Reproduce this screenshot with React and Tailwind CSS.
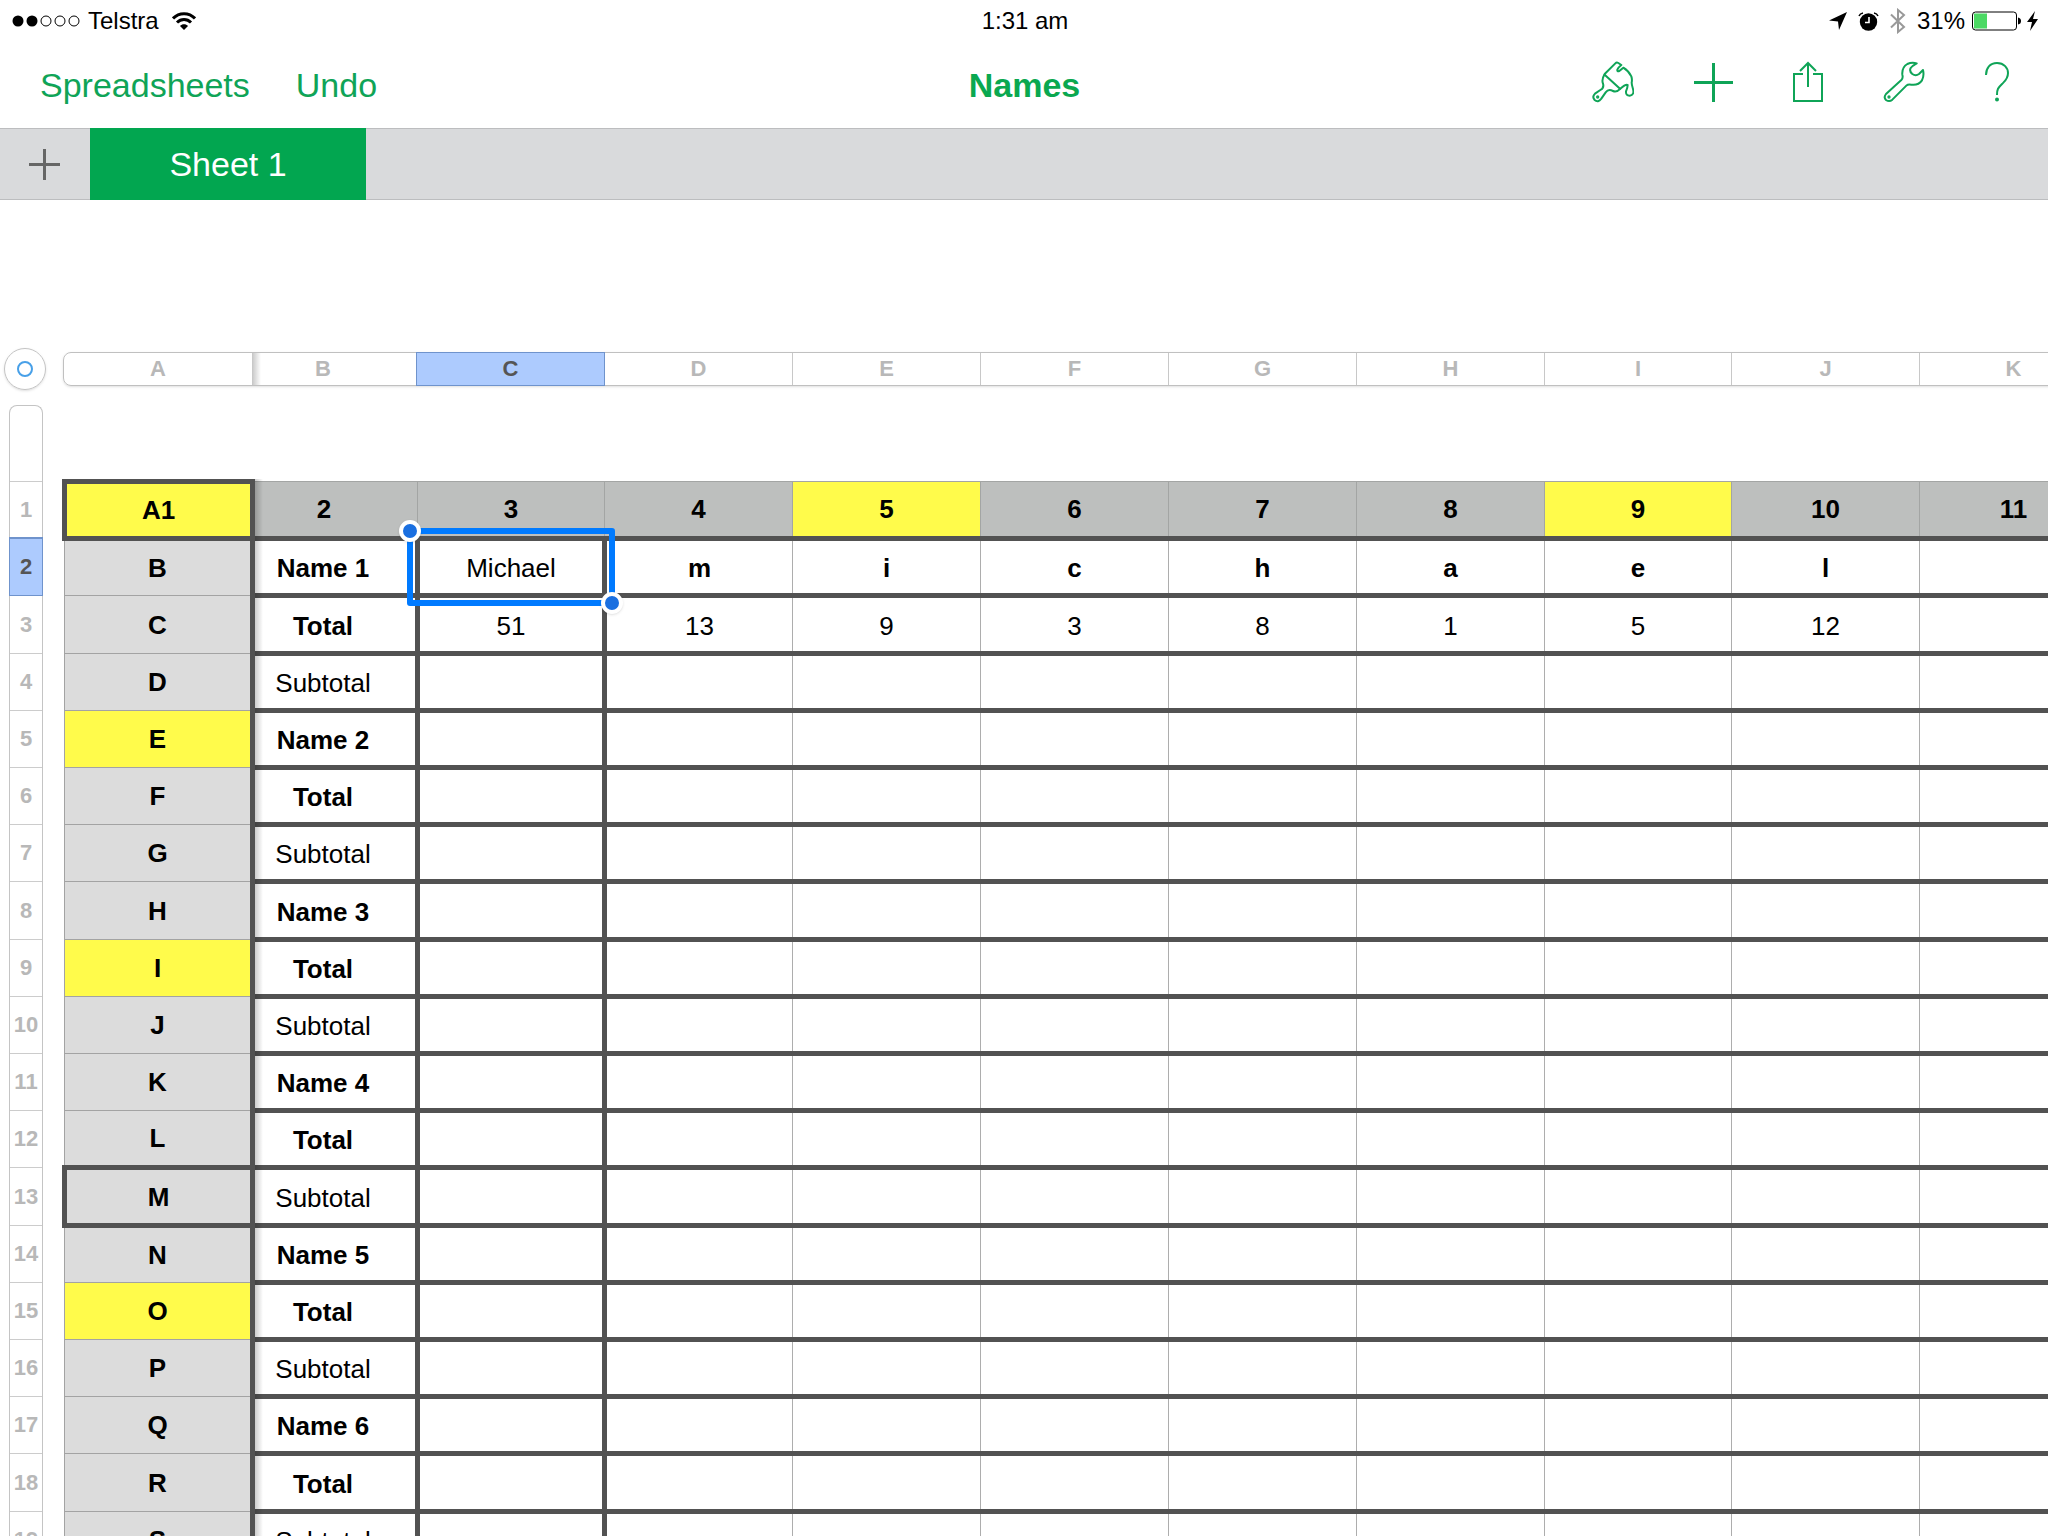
import { clsx } from 'clsx';

const columns = [
  { letter: 'A', width: 'w-[188px]' },
  { letter: 'B', width: 'w-[165px]' },
  { letter: 'C', width: 'w-[187px]' },
  { letter: 'D', width: 'w-[188px]' },
  { letter: 'E', width: 'w-[188px]' },
  { letter: 'F', width: 'w-[188px]' },
  { letter: 'G', width: 'w-[188px]' },
  { letter: 'H', width: 'w-[188px]' },
  { letter: 'I', width: 'w-[187px]' },
  { letter: 'J', width: 'w-[188px]' },
  { letter: 'K', width: 'w-[188px]' },
];

const headerCells = ['A1', '2', '3', '4', '5', '6', '7', '8', '9', '10', '11'];

const rowLetters = 'BCDEFGHIJKLMNOPQRS'.split('');

const values = {
  2: ['Michael', 'm', 'i', 'c', 'h', 'a', 'e', 'l', ''],
  3: ['51', '13', '9', '3', '8', '1', '5', '12', ''],
};

const emptyRow = ['', '', '', '', '', '', '', '', ''];

const rows = rowLetters.map((letter, i) => {
  const kind = i % 3;
  const label = kind === 0 ? `Name ${i / 3 + 1}` : kind === 1 ? 'Total' : 'Subtotal';
  return { number: i + 2, letter, label, light: kind === 2, cells: values[i + 2] ?? emptyRow };
});

// every fifth row is one pixel taller
const rowHeight = (n) => (n % 5 === 3 ? 'h-[58px]' : 'h-[57px]');

function BrushIcon() {
  return (
    <svg className="h-[42px] w-[42px]" viewBox="21 21 126 126" fill="none" stroke="currentColor" strokeWidth="6" strokeLinejoin="round" strokeLinecap="round" aria-hidden="true">
      <path d="M59 60L91 28Q95 24 100 27L109 33Q101 39 97 47Q96 54 103 51L115 41Q131 51 139 67Q142 76 140 86Q140 92 144 105Q149 123 134 125Q122 125 123 112Q128 100 128 93Q123 89 105 105Q94 116 84 111Q70 104 62 115L49 134Q39 147 29 138Q20 129 30 119L46 108Q58 101 54 89Q49 77 59 60Z" />
      <path d="M59 62L105 104" />
      <circle cx="38" cy="129" r="2" fill="currentColor" />
    </svg>
  );
}

function PlusIcon() {
  return (
    <svg className="h-[39px] w-[39px]" viewBox="0 0 39 39" fill="none" stroke="currentColor" strokeWidth="3" aria-hidden="true">
      <path d="M19.5 0V39M0 19.5H39" />
    </svg>
  );
}

function ShareIcon() {
  return (
    <svg className="h-[42px] w-[30px]" viewBox="0 0 30 42" fill="none" stroke="currentColor" strokeWidth="2" aria-hidden="true">
      <path d="M10 13H1V40H29V13H20M15 26V2M7 10L15 2L23 10" />
    </svg>
  );
}

function WrenchIcon() {
  return (
    <svg className="h-[42px] w-[42px]" viewBox="21 21 126 126" fill="none" stroke="currentColor" strokeWidth="6" strokeLinejoin="round" aria-hidden="true">
      <path d="M122 28Q108 23 94 30Q77 40 79 62Q82 72 76 78L30 120Q22 130 30 138Q40 145 49 137L91 95Q96 90 106 92Q127 95 138 79Q145 65 141 48L129 60Q119 67 109 60Q99 52 104 42Q108 36 122 28Z" />
      <circle cx="39" cy="129" r="2" fill="currentColor" />
    </svg>
  );
}

function HelpIcon() {
  return (
    <svg className="h-[42px] w-6" viewBox="0 0 24 42" fill="none" stroke="currentColor" strokeWidth="2" aria-hidden="true">
      <path d="M1 14C1 7 5 2 12 2C19 2 23 7 23 12C23 18 20 20 17 23C13 27 12 28 12 34" />
      <circle cx="12" cy="38.500" r="1" fill="currentColor" />
    </svg>
  );
}

function StatusBar() {
  return (
    <div className="grid h-[42px] grid-cols-3 items-center pl-[12px] pr-[10px] text-[24px] leading-[42px] text-black">
      <div className="flex items-center">
        <svg className="h-3 w-[68px]" viewBox="0 0 68 12" aria-hidden="true">
          <circle cx="6" cy="6" r="5.5" />
          <circle cx="20" cy="6" r="5.5" />
          <g fill="none" stroke="currentColor">
            <circle cx="34" cy="6" r="5" />
            <circle cx="48" cy="6" r="5" />
            <circle cx="62" cy="6" r="5" />
          </g>
        </svg>
        <span className="ml-2">Telstra</span>
        <svg className="ml-[13px] h-[18px] w-6" viewBox="0 0 24 18" fill="none" stroke="currentColor" strokeWidth="3" aria-hidden="true">
          <path d="M1 6.500C7 0 17 0 23 6.500M5 10.500C9 6.500 15 6.500 19 10.500" />
          <path d="M8 14C10 11.500 14 11.500 16 14L12 18Z" fill="currentColor" stroke="none" />
        </svg>
      </div>
      <div className="text-center">1:31 am</div>
      <div className="flex items-center justify-end">
        <svg className="h-[18px] w-[18px]" viewBox="0 0 18 18" fill="currentColor" aria-hidden="true">
          <path d="M18 0L0 8.500L9 9.500L10 18Z" />
        </svg>
        <svg className="ml-[11px] h-[19px] w-[21px]" viewBox="0 0 21 19" aria-hidden="true">
          <circle cx="10.500" cy="10" r="8.700" />
          <path d="M11 5V10.500H7" fill="none" stroke="white" strokeWidth="1.600" />
          <path d="M1 4Q2 1.500 5 1M20 4Q19 1.500 16 1" fill="none" stroke="black" strokeWidth="1.500" />
        </svg>
        <svg className="ml-[11px] h-[26px] w-4 text-[#999999]" viewBox="0 0 16 26" fill="none" stroke="currentColor" strokeWidth="2" aria-hidden="true">
          <path d="M1 6.500L14 19L8 24V2L14 7L1 19.500" />
        </svg>
        <span className="ml-[11px]">31%</span>
        <svg className="ml-[7px] h-5 w-[49px]" viewBox="0 0 49 20" aria-hidden="true">
          <rect x="0.500" y="1" width="44" height="18" rx="3" fill="none" stroke="black" />
          <rect x="2" y="2.500" width="13" height="15" fill="#4cd964" />
          <path d="M46 6.500Q49 7 49 10Q49 13 46 13.500Z" />
        </svg>
        <svg className="ml-[6px] h-5 w-[11px]" viewBox="0 0 11 20" fill="currentColor" aria-hidden="true">
          <path d="M8 0L0 11H5L3 20L11 8H6Z" />
        </svg>
      </div>
    </div>
  );
}

function NavBar() {
  return (
    <header className="grid h-[86px] grid-cols-3 items-center pl-10 pr-[39px] text-[34px] leading-[86px] text-[#0fa457]">
      <div className="flex items-center gap-[46px]">
        <button type="button">Spreadsheets</button>
        <button type="button">Undo</button>
      </div>
      <h1 className="text-center font-bold text-[#0aa850]">Names</h1>
      <div className="flex items-center justify-end gap-[60px] pb-1.5">
        <button type="button" aria-label="Format"><BrushIcon /></button>
        <button type="button" aria-label="Insert"><PlusIcon /></button>
        <button type="button" aria-label="Share"><ShareIcon /></button>
        <button type="button" aria-label="Tools"><WrenchIcon /></button>
        <button type="button" aria-label="Help"><HelpIcon /></button>
      </div>
    </header>
  );
}

function SheetTabs() {
  return (
    <nav className="flex h-[72px] shrink-0 bg-[#d9dadc] shadow-[inset_0_1px_0_#bcbdbf,inset_0_-1px_0_#bcbdbf]">
      <button type="button" aria-label="Add sheet" className="flex w-[90px] items-center justify-center pr-0.5 text-[#666666]">
        <svg className="h-[31px] w-[31px]" viewBox="0 0 31 31" stroke="currentColor" strokeWidth="3" aria-hidden="true">
          <path d="M15.500 0V31M0 15.500H31" />
        </svg>
      </button>
      <button type="button" className="w-[276px] bg-[#02a650] text-[34px] leading-[72px] text-white">Sheet 1</button>
    </nav>
  );
}

function ColumnStrip() {
  return (
    <div className="flex items-center pl-1 pt-[148px] text-[22px] font-bold text-[#b8b8b8]">
      <button type="button" aria-label="Select table" className="flex h-[42px] w-[42px] shrink-0 items-center justify-center rounded-full border border-[#c4c4c4] shadow-sm">
        <span className="h-4 w-4 rounded-full border-2 border-[#48a0e8]" />
      </button>
      <div className="ml-[17px] flex h-[34px] shrink-0 rounded-l-lg border border-[#c0c0c0] shadow-sm">
        {columns.map((c, i) => (
          <button
            key={c.letter}
            type="button"
            className={clsx(
              'relative shrink-0 leading-8',
              c.width,
              c.letter === 'B' && 'pr-6',
              c.letter === 'C' && 'z-10 bg-[#adcbfe] text-[#555555] outline outline-[#6f93cc]',
              i > 0 && c.letter !== 'C' && 'border-l border-[#c8c8c8]',
            )}
          >
            {c.letter}
            {c.letter === 'B' && <span className="absolute inset-y-0 left-0 w-2 bg-linear-to-r from-black/20 to-transparent" />}
          </button>
        ))}
      </div>
    </div>
  );
}

function RowStrip() {
  return (
    <div className="w-[34px] shrink-0 rounded-t-lg border-x border-t border-[#c4c4c4] text-center text-[22px] font-bold leading-[56px] text-[#b8b8b8]">
      <div className="h-[75px]" />
      {['1', ...rows.map((r) => String(r.number))].map((n) => (
        <button
          key={n}
          type="button"
          className={clsx(
            'block w-full border-t',
            rowHeight(Number(n)),
            n === '2' ? 'bg-[#adcbfe] text-[#555555] border-[#6f93cc] outline outline-[#6f93cc]' : 'border-[#cccccc]',
          )}
        >
          {n}
        </button>
      ))}
    </div>
  );
}

function Selection() {
  return (
    <span className="pointer-events-none absolute -inset-[13px] z-10 rounded-[3px] border-[6px] border-[#007aff]">
      <span className="absolute -left-[14px] -top-[14px] h-[22px] w-[22px] rounded-full border-4 border-white bg-[#1a6fe0] shadow" />
      <span className="absolute -bottom-[14px] -right-[14px] h-[22px] w-[22px] rounded-full border-4 border-white bg-[#1a6fe0] shadow" />
    </span>
  );
}

function Sheet() {
  return (
    <div className="relative mt-[74px]">
      <table className="w-[2043px] table-fixed border-collapse text-center text-[26px] leading-8 text-black">
        <colgroup>
          {columns.map((c) => (
            <col key={c.letter} className={c.width} />
          ))}
        </colgroup>
        <thead>
          <tr className="h-[57px]">
            {headerCells.map((text, i) => (
              <th
                key={text}
                scope="col"
                className={clsx(
                  'font-bold',
                  i === 1 ? 'p-0 pr-6' : 'p-0',
                  i === 0 ? 'border-[5px] border-[#525252]' : 'border border-b-[5px] border-[#a3a5a4] border-b-[#525252]',
                  i % 4 === 0 ? 'bg-[#fffb4b]' : 'bg-[#bdbfbe]',
                )}
              >
                {text}
              </th>
            ))}
          </tr>
        </thead>
        <tbody>
          {rows.map((row) => (
            <tr key={row.letter} className={rowHeight(row.number)}>
              <th
                scope="row"
                className={clsx(
                  'p-0 font-bold',
                  row.letter === 'M'
                    ? 'border-[5px] border-[#525252]'
                    : 'border border-r-[5px] border-[#a3a3a3] border-r-[#525252]',
                  'EIO'.includes(row.letter) ? 'bg-[#fffb4b]' : 'bg-[#dcdcdc]',
                )}
              >
                {row.letter}
              </th>
              <td className={clsx('border-[5px] border-[#525252] p-0 pr-6 pt-0.5', !row.light && 'font-bold')}>{row.label}</td>
              {row.cells.map((value, i) => (
                <td
                  key={i}
                  className={clsx(
                    'relative p-0 pt-0.5',
                    i === 0
                      ? 'border-[5px] border-[#525252]'
                      : 'border-x border-y-[5px] border-x-[#adadad] border-y-[#525252]',
                    row.number === 2 && i > 0 && 'font-bold',
                  )}
                >
                  {value}
                  {row.number === 2 && i === 0 && <Selection />}
                </td>
              ))}
            </tr>
          ))}
        </tbody>
      </table>
      <div className="pointer-events-none absolute inset-y-0 left-[193px] w-2 bg-linear-to-r from-black/20 to-transparent" />
    </div>
  );
}

export default function App() {
  return (
    <div className="flex h-screen flex-col overflow-hidden bg-white font-['Liberation_Sans',Arial,sans-serif]">
      <StatusBar />
      <NavBar />
      <SheetTabs />
      <main className="min-h-0 flex-1 overflow-hidden">
        <ColumnStrip />
        <div className="flex items-start gap-[19px] pl-[9px] pt-[15px]">
          <RowStrip />
          <Sheet />
        </div>
      </main>
    </div>
  );
}
